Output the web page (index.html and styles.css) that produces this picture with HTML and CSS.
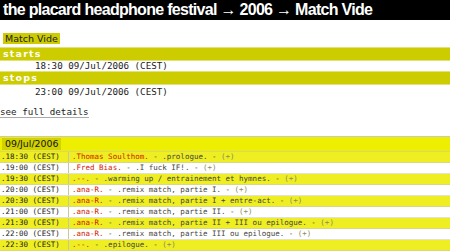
FILE: index.html
```html
<!DOCTYPE html>
<html>
<head>
<meta charset="utf-8">
<link rel="stylesheet" href="styles.css">
</head>
<body>
<div class="top">the placard headphone festival → 2006 → Match Vide</div>
<div class="crumb"><span class="tag">Match Vide</span></div>
<div class="bar first">starts</div>
<div class="when w1">18:30 09/Jul/2006 (CEST)</div>
<div class="bar">stops</div>
<div class="when w2">23:00 09/Jul/2006 (CEST)</div>
<div class="more"><span class="link">see full details</span></div>
<div class="sched">
  <div class="dayrow"><span class="day">09/Jul/2006</span></div>
  <div class="row odd"><span class="t">.18:30 (CEST)</span><span class="d"><span class="who">.Thomas Soulthom.</span> - .prologue. - <span class="plus">(+)</span></span></div>
  <div class="row"><span class="t">.19:00 (CEST)</span><span class="d"><span class="who">.Fred Bias.</span> - .I fuck IF!. - <span class="plus">(+)</span></span></div>
  <div class="row odd"><span class="t">.19:30 (CEST)</span><span class="d"><span class="who">.--.</span> - .warming up / entrainement et hymnes. - <span class="plus">(+)</span></span></div>
  <div class="row"><span class="t">.20:00 (CEST)</span><span class="d"><span class="who">.ana-R.</span> - .remix match, partie I. - <span class="plus">(+)</span></span></div>
  <div class="row odd"><span class="t">.20:30 (CEST)</span><span class="d"><span class="who">.ana-R.</span> - .remix match, partie I + entre-act. - <span class="plus">(+)</span></span></div>
  <div class="row"><span class="t">.21:00 (CEST)</span><span class="d"><span class="who">.ana-R.</span> - .remix match, partie II. - <span class="plus">(+)</span></span></div>
  <div class="row odd"><span class="t">.21:30 (CEST)</span><span class="d"><span class="who">.ana-R.</span> - .remix match, partie II + III ou epilogue. - <span class="plus">(+)</span></span></div>
  <div class="row"><span class="t">.22:00 (CEST)</span><span class="d"><span class="who">.ana-R.</span> - .remix match, partie III ou epilogue. - <span class="plus">(+)</span></span></div>
  <div class="row odd"><span class="t">.22:30 (CEST)</span><span class="d"><span class="who">.--.</span> - .epilogue. - <span class="plus">(+)</span></span></div>
</div>
</body>
</html>
```
FILE: styles.css
```css
html, body {
  margin: 0;
  padding: 0;
  background: #fff;
}
body {
  font-family: "DejaVu Sans Mono", monospace;
  color: #222;
}
.top {
  background: #000;
  color: #fff;
  font-family: "Liberation Sans", Arial, sans-serif;
  font-weight: bold;
  font-size: 16px;
  letter-spacing: -0.7px;
  height: 20px;
  line-height: 20px;
  padding-left: 3px;
  white-space: nowrap;
}
.crumb {
  margin-top: 7px;
  padding-left: 3px;
  height: 11px;
}
.tag {
  display: inline-block;
  background: #cccc00;
  font-family: "DejaVu Sans", sans-serif;
  font-size: 9.5px;
  line-height: 11px;
  height: 11px;
  padding: 0 2px;
  color: #222;
}
.bar {
  background: #cccc00;
  border-top: 1px solid #e2e27a;
  border-bottom: 1px solid #e2e27a;
  height: 12px;
  line-height: 12px;
  color: #fff;
  font-family: "DejaVu Sans", sans-serif;
  font-weight: bold;
  font-size: 9.5px;
  letter-spacing: 1.2px;
  padding-left: 3px;
}
.bar.first {
  margin-top: 9px;
}
.when {
  font-size: 9.2px;
  padding-left: 35px;
  color: #222;
}
.w1 {
  height: 10px;
  line-height: 10px;
}
.w2 {
  height: 14px;
  line-height: 14px;
}
.more {
  margin-top: 7px;
  font-size: 9.2px;
  line-height: 12px;
  height: 13px;
}
.link {
  border-bottom: 1px solid #aaa;
  color: #222;
}
.sched {
  margin-top: 17px;
  border-top: 1px solid #c8c8c8;
}
.dayrow {
  display: flex;
  align-items: flex-start;
  background: #eeee00;
  height: 15px;
  padding: 1px 0 0 2px;
  box-sizing: border-box;
  border-bottom: 1px solid #d8d870;
}
.day {
  display: block;
  background: #d2d200;
  font-family: "DejaVu Sans", sans-serif;
  font-size: 9.4px;
  line-height: 12px;
  height: 12px;
  padding: 0 3px;
  color: #111;
}
.row {
  display: flex;
  height: 10px;
  line-height: 10px;
  font-size: 7.5px;
  border-bottom: 1px solid #e2e2d0;
  white-space: nowrap;
}
.row.odd {
  background: #eeee22;
  border-bottom-color: #d8d880;
}
.t {
  width: 67px;
  padding-left: 1px;
  border-right: 1px solid #c8c8a0;
  color: #222;
}
.d {
  padding-left: 3px;
  color: #444;
}
.who {
  color: #d42000;
}
.plus {
  color: #8c8c60;
}
```
